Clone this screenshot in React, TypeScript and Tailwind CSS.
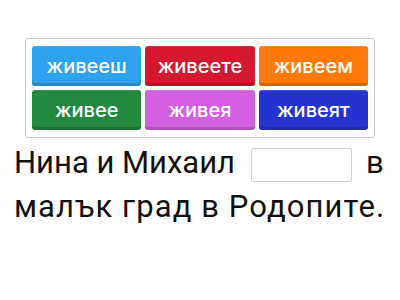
import React from 'react';

// Word options shown in the answer bank
const options = [
    { label: 'живееш', bg: 'bg-[#2ea2ec]' },
    { label: 'живеете', bg: 'bg-[#d4192e]' },
    { label: 'живеем', bg: 'bg-[#ff7a0a]' },
    { label: 'живее', bg: 'bg-[#23893f]' },
    { label: 'живея', bg: 'bg-[#d35fe1]' },
    { label: 'живеят', bg: 'bg-[#2533d1]' },
];

export default function App() {
    return (
        <div className="w-[400px] h-[300px] bg-white overflow-hidden">
            <div className="ml-[25px] mt-[38px] w-[350px] rounded-[3px] border border-[#c9c9c9] px-[6px] py-[7px]">
                <div className="grid grid-cols-3 gap-[4px]">
                    {options.map(opt => (
                        <div
                            key={opt.label}
                            className={`${opt.bg} h-[40px] rounded-[3px] flex items-center justify-center text-white text-[20px] font-medium shadow-[inset_0_-3px_0_rgba(0,0,0,0.16),inset_0_1px_0_rgba(255,255,255,0.12)]`}
                            style={{ fontFamily: 'Inter, "Noto Sans", sans-serif' }}
                        >
                            {opt.label}
                        </div>
                    ))}
                </div>
            </div>
            <p
                className="mt-[3px] pl-[14px] text-[31px] leading-[44px] text-[#111] whitespace-nowrap"
                style={{ fontFamily: 'Roboto, "Liberation Sans", sans-serif' }}
            >
                Нина и Михаил
                <span className="inline-block align-middle w-[101px] h-[34px] ml-[16px] mr-[14px] border border-[#cfcfcf] rounded-[2px] bg-white" />
                в
                <br />
                <span className="tracking-[1.1px]">малък град в Родопите.</span>
            </p>
        </div>
    );
}
